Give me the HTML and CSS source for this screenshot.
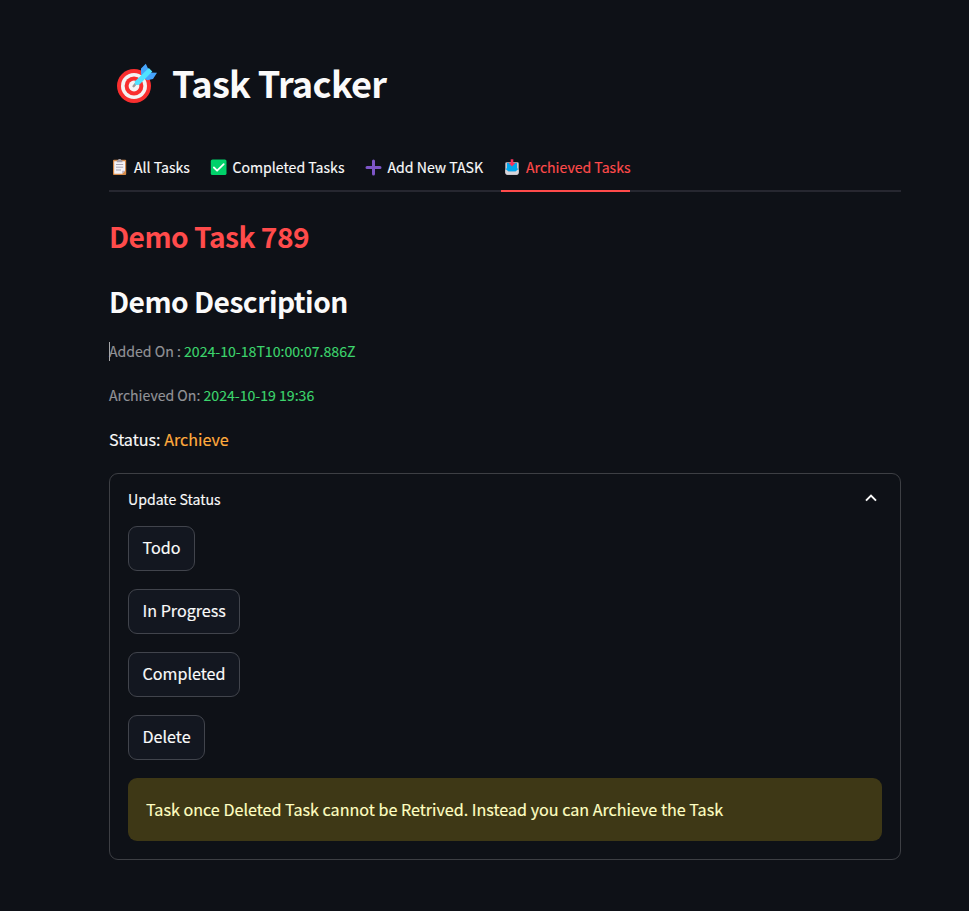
FILE: index.html
```html
<!DOCTYPE html>
<html lang="en">
<head>
<meta charset="utf-8">
<title>Task Tracker</title>
<link rel="stylesheet" href="styles.css">
</head>
<body>
<main class="page">
  <h1 class="title">
    <svg class="title-icon" viewBox="0 0 42 42" aria-hidden="true">
      <circle cx="18" cy="24" r="17" fill="#f92f2f"/>
      <circle cx="18" cy="24" r="13" fill="#f4f4f4"/>
      <circle cx="18" cy="24" r="9.4" fill="#f92f2f"/>
      <circle cx="18" cy="24" r="5.4" fill="#f4f4f4"/>
      <path d="M17.6 24.2 22 19" stroke="#9b9b9b" stroke-width="2.4" stroke-linecap="round"/>
      <path d="M25 12V6.5L29.8 1.8 32.5 7.5 31 13 27 16ZM28 16l5-5.5 8 .2-4 6.3-6 1.2Z" fill="#46a4fb"/>
      <path d="M19 19.2 32.8 6 36.3 9.6 23.5 22.4Q20.5 24 18.7 22Z" fill="#50e2ff"/>
    </svg>
    <span>Task Tracker</span>
  </h1>

  <nav class="tabs">
    <a class="tab tab-all">
      <svg class="tab-icon" viewBox="0 0 18 18" aria-hidden="true">
        <rect x="1" y="1.7" width="13.2" height="15.3" rx="1" fill="#d68b49"/>
        <path d="M2.2 3.2H13v9.6L10.2 15.7h-8Z" fill="#f4f2f7"/>
        <path d="M10.2 15.7v-2.9H13Z" fill="#b9b2c5"/>
        <path d="M4.8 2.2h1.6V.9h2.4v1.3h1.6v2H4.8Z" fill="#a5a0aa"/>
        <path d="M4 6.5h7.2M4 9.2h7.2M4 12h5" stroke="#aaa5b1" stroke-width="1"/>
      </svg>
      <span>All Tasks</span>
    </a>
    <a class="tab tab-completed">
      <svg class="tab-icon" viewBox="0 0 18 18" aria-hidden="true">
        <rect x="1.8" y="1.4" width="15.7" height="15.7" rx="1.7" fill="#00d26a"/>
        <path d="m4.9 9.5 3.2 3.2 6.6-6.6" fill="none" stroke="#f6fff9" stroke-width="1.8" stroke-linecap="round" stroke-linejoin="round"/>
      </svg>
      <span>Completed Tasks</span>
    </a>
    <a class="tab tab-add">
      <svg class="tab-icon" viewBox="0 0 18 18" aria-hidden="true">
        <path d="M9.5 3v13M3 9.5h13" stroke="#7d55c7" stroke-width="3" stroke-linecap="round"/>
      </svg>
      <span>Add New TASK</span>
    </a>
    <a class="tab tab-archived">
      <svg class="tab-icon" viewBox="0 0 18 18" aria-hidden="true">
        <path d="M5.5 4.2h11a1.2 1.2 0 0 1 1.2 1.2v9.2a2.2 2.2 0 0 1-2.2 2.2h-9a2.2 2.2 0 0 1-2.2-2.2V5.4a1.2 1.2 0 0 1 1.2-1.2Z" fill="#c9c4cc"/>
        <path d="M6 5h10v5l1.2 1.2-2.2 2.4H7l-2.2-2.4L6 10Z" fill="#00a6ed"/>
        <path d="M4.3 11.8h1.2l2 2h7l2-2h1.2v2.8a2.2 2.2 0 0 1-2.2 2.2h-9a2.2 2.2 0 0 1-2.2-2.2Z" fill="#d8d5da"/>
        <path d="M9.7 1.2h2.6v3.8h2L11 8.6 7.7 5h2Z" fill="#f8315b"/>
      </svg>
      <span>Archieved Tasks</span>
    </a>
  </nav>

  <h2 class="task-name"><span>Demo Task 789</span></h2>
  <h2 class="task-description"><span>Demo Description</span></h2>
  <p class="meta meta-added"><span class="label">Added On : </span><span class="date">2024-10-18T10:00:07.886Z</span></p>
  <p class="meta"><span class="label">Archieved On: </span><span class="date">2024-10-19 19:36</span></p>
  <p class="status">Status: <span class="state">Archieve</span></p>

  <section class="expander">
    <header class="expander-head">
      <span>Update Status</span>
      <svg class="chevron" viewBox="0 0 14 10" aria-hidden="true"><path d="M2 7.6 7 2.6l5 5" fill="none" stroke="#fafafa" stroke-width="2"/></svg>
    </header>
    <div class="actions">
      <button class="button" type="button">Todo</button>
      <button class="button" type="button">In Progress</button>
      <button class="button" type="button">Completed</button>
      <button class="button" type="button">Delete</button>
    </div>
    <div class="warning">Task once Deleted Task cannot be Retrived. Instead you can Archieve the Task</div>
  </section>
</main>
</body>
</html>
```
FILE: styles.css
```css
* { box-sizing: border-box; }

body {
  margin: 0;
  min-height: 911px;
  background: #0e1117;
  color: #fafafa;
  font-family: "Noto Sans CJK SC", "Open Sans", sans-serif;
  font-size: 16.12px;
  line-height: 28px;
  -webkit-text-stroke: 0.15px currentColor;
}

.page {
  width: 792px;
  margin-left: 109px;
  padding-top: 58px;
}

h1, h2, p { margin: 0; }

h1, h2 { -webkit-text-stroke: 0; }

.title {
  display: flex;
  align-items: center;
  height: 49px;
  font-size: 36.2px;
  font-weight: 700;
  letter-spacing: -0.7px;
  line-height: 49px;
}

.title-icon {
  width: 42px;
  height: 42px;
  margin: 0 14px 0 7px;
}

.tabs {
  display: flex;
  gap: 18px;
  height: 47px;
  margin-top: 38px;
  border-bottom: 2px solid #262730;
}

.tab {
  display: flex;
  align-items: center;
  height: 47px;
  padding-bottom: 1px;
  border-bottom: 2px solid transparent;
  font-size: 14.1px;
  white-space: nowrap;
}

.tab-icon {
  flex: none;
  width: 18px;
  height: 18px;
  margin-right: 6px;
}

.tab-all { width: 82px; }
.tab-all .tab-icon { margin: 0 4px 0 3px; }
.tab-completed { width: 137px; }
.tab-completed .tab-icon { margin-right: 5.5px; }
.tab-add { width: 119px; }
.tab-add .tab-icon { margin-right: 5.5px; }
.tab-archived {
  width: 129px;
  border-color: #ff4b4b;
  color: #ff4b4b;
}
.tab-archived .tab-icon { margin-right: 7px; }

.task-name, .task-description {
  font-size: 28.2px;
  font-weight: 700;
  letter-spacing: -0.54px;
  line-height: 38px;
}

.task-name {
  margin-top: 25px;
  color: #ff4b4b;
}

.task-description { margin-top: 27px; }

.meta {
  height: 26px;
  margin-top: 18px;
  font-size: 14.1px;
  line-height: 26px;
}

.meta-added {
  position: relative;
  margin-top: 18px;
}

.meta-added::before {
  content: "";
  position: absolute;
  left: 0;
  top: 4px;
  width: 1px;
  height: 19px;
  background: #a5a6a9;
}

.label { color: #929397; }
.date { color: #3dd56d; }

.status {
  margin-top: 17px;
}

.state { color: #ffab3d; }

.expander {
  height: 387px;
  margin-top: 20px;
  padding: 0 18px;
  border: 1px solid #3d3f44;
  border-radius: 9px;
}

.expander-head {
  display: flex;
  align-items: center;
  justify-content: space-between;
  height: 52px;
  padding: 0 4px 2px 0;
  font-size: 14.1px;
}

.chevron {
  width: 14px;
  height: 10px;
  margin-top: -3px;
}

.actions {
  display: flex;
  flex-direction: column;
  align-items: flex-start;
  gap: 18px;
}

.button {
  height: 45px;
  padding: 0 13.5px 3px;
  border: 1px solid #41444c;
  border-radius: 9px;
  background: #131720;
  color: inherit;
  font: inherit;
}

.warning {
  height: 63px;
  margin-top: 18px;
  padding: 0 18px;
  border-radius: 9px;
  background: #3e3816;
  color: #ffffc2;
  line-height: 63px;
}
```
